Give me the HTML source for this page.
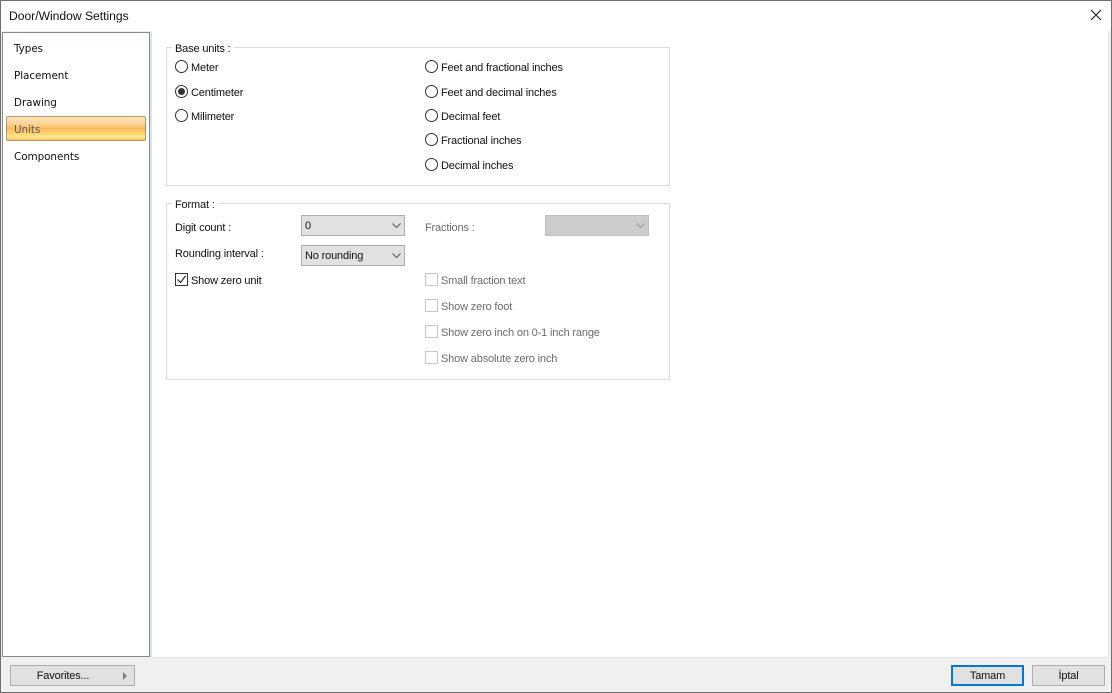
<!DOCTYPE html>
<html><head><meta charset="utf-8">
<style>
html,body{margin:0;padding:0;background:#fff}
#w{position:relative;width:1112px;height:693px;overflow:hidden;background:#fff;font-family:"Liberation Sans",sans-serif;font-size:11px;letter-spacing:-0.16px;color:#111}
#w div{position:absolute;box-sizing:border-box;white-space:nowrap}
.t{line-height:16px;height:16px}
.d{color:#6d6d6d}
.nav{left:14px;font-size:10.4px;letter-spacing:-0.05px;font-family:"DejaVu Sans",sans-serif;line-height:14px;height:14px;color:#111}
.fs{border:1px solid #dcdcdc}
.lg{background:#fff;padding:0 3px;line-height:16px;height:16px}
.cb{width:13px;height:13px;border:1px solid #c8c8c8;background:#fff}
.sel{background:#e1e1e1;border:1px solid #adadad;line-height:21px;padding-left:3px}
.btn{background:#e1e1e1;border:1px solid #adadad;text-align:center;line-height:21px}
svg{position:absolute;overflow:visible}
</style></head><body>
<div id="w">
<div style="left:0;top:31px;width:1112px;height:662px;background:#f0f0f0"></div>
<div style="left:152px;top:31px;width:956px;height:626px;background:#fff"></div>
<div style="left:150px;top:31px;width:2px;height:626px;background:#e3e3e3"></div>
<div style="left:1108px;top:31px;width:1px;height:626px;background:#e3e3e3"></div>
<div style="left:152px;top:657px;width:957px;height:1px;background:#e3e3e3"></div>
<div style="left:0;top:0;width:1112px;height:693px;border:1px solid #6e6e6e"></div>
<div class="t" style="left:9px;top:9px;font-size:12.1px;letter-spacing:0;line-height:14px;height:14px">Door/Window Settings</div>
<svg style="left:1090px;top:9px" width="12" height="12"><path d="M1 1L11 11M11 1L1 11" stroke="#222" stroke-width="1.1" fill="none"/></svg>

<div style="left:2px;top:32px;width:148px;height:625px;background:#fff;border:1px solid #828a94"></div>
<div class="nav" style="top:42px">Types</div>
<div class="nav" style="top:69px">Placement</div>
<div class="nav" style="top:96px">Drawing</div>
<div style="left:6px;top:116px;width:140px;height:25px;border:1px solid #b09a6e;border-radius:2px;background:linear-gradient(#fde3b8 0,#fbd49a 30%,#f9bb5f 50%,#fbd46d 72%,#fee89a 85%,#fbc65e 100%)"></div>
<div class="nav" style="top:123px;color:#5b5b5b">Units</div>
<div class="nav" style="top:150px">Components</div>

<div class="fs" style="left:166px;top:47px;width:504px;height:139px"></div>
<div class="lg" style="left:172px;top:41px;height:14px;line-height:16px">Base units :</div>
<svg style="left:175px;top:60px" width="13" height="13"><circle cx="6.5" cy="6.5" r="6" fill="#fff" stroke="#333"/></svg>
<div class="t" style="left:191px;top:60px">Meter</div>
<svg style="left:175px;top:85px" width="13" height="13"><circle cx="6.5" cy="6.5" r="6" fill="#fff" stroke="#333"/><circle cx="6.5" cy="6.5" r="3.5" fill="#333"/></svg>
<div class="t" style="left:191px;top:85px">Centimeter</div>
<svg style="left:175px;top:109px" width="13" height="13"><circle cx="6.5" cy="6.5" r="6" fill="#fff" stroke="#333"/></svg>
<div class="t" style="left:191px;top:109px">Milimeter</div>

<svg style="left:425px;top:60px" width="13" height="13"><circle cx="6.5" cy="6.5" r="6" fill="#fff" stroke="#333"/></svg>
<div class="t" style="left:441px;top:60px">Feet and fractional inches</div>
<svg style="left:425px;top:85px" width="13" height="13"><circle cx="6.5" cy="6.5" r="6" fill="#fff" stroke="#333"/></svg>
<div class="t" style="left:441px;top:85px">Feet and decimal inches</div>
<svg style="left:425px;top:109px" width="13" height="13"><circle cx="6.5" cy="6.5" r="6" fill="#fff" stroke="#333"/></svg>
<div class="t" style="left:441px;top:109px">Decimal feet</div>
<svg style="left:425px;top:133px" width="13" height="13"><circle cx="6.5" cy="6.5" r="6" fill="#fff" stroke="#333"/></svg>
<div class="t" style="left:441px;top:133px">Fractional inches</div>
<svg style="left:425px;top:158px" width="13" height="13"><circle cx="6.5" cy="6.5" r="6" fill="#fff" stroke="#333"/></svg>
<div class="t" style="left:441px;top:158px">Decimal inches</div>

<div class="fs" style="left:166px;top:203px;width:504px;height:177px"></div>
<div class="lg" style="left:172px;top:197px;height:14px;line-height:16px">Format :</div>
<div class="t" style="left:175px;top:220px">Digit count :</div>
<div class="sel" style="left:301px;top:215px;width:104px;height:21px">0</div>
<svg style="left:392px;top:223px" width="9" height="5"><path d="M0.5 0.5L4.5 4.5L8.5 0.5" stroke="#555" fill="none"/></svg>
<div class="t" style="left:175px;top:246px">Rounding interval :</div>
<div class="sel" style="left:301px;top:245px;width:104px;height:21px">No rounding</div>
<svg style="left:392px;top:253px" width="9" height="5"><path d="M0.5 0.5L4.5 4.5L8.5 0.5" stroke="#555" fill="none"/></svg>
<div class="cb" style="left:175px;top:273px;border-color:#333"></div>
<svg style="left:177px;top:275px" width="9" height="9"><path d="M0.5 4.5L3.5 7.5L8.5 1" stroke="#222" stroke-width="1.1" fill="none"/></svg>
<div class="t" style="left:191px;top:273px">Show zero unit</div>

<div class="t d" style="left:425px;top:220px">Fractions :</div>
<div style="left:545px;top:215px;width:104px;height:21px;background:#cccccc;border:1px solid #bfbfbf"></div>
<svg style="left:636px;top:223px" width="9" height="5"><path d="M0.5 0.5L4.5 4.5L8.5 0.5" stroke="#999" fill="none"/></svg>
<div class="cb" style="left:425px;top:273px"></div>
<div class="t d" style="left:441px;top:273px">Small fraction text</div>
<div class="cb" style="left:425px;top:299px"></div>
<div class="t d" style="left:441px;top:299px">Show zero foot</div>
<div class="cb" style="left:425px;top:325px"></div>
<div class="t d" style="left:441px;top:325px">Show zero inch on 0-1 inch range</div>
<div class="cb" style="left:425px;top:351px"></div>
<div class="t d" style="left:441px;top:351px">Show absolute zero inch</div>

<div class="btn" style="left:10px;top:665px;width:125px;height:21px;padding-right:19px">Favorites...</div>
<svg style="left:123px;top:672px" width="4" height="8"><path d="M0 0L4 4L0 8Z" fill="#808080"/></svg>
<div class="btn" style="left:951px;top:665px;width:73px;height:21px;border:2px solid #0078d7;line-height:19px">Tamam</div>
<div class="btn" style="left:1032px;top:665px;width:73px;height:21px">İptal</div>
</div>
</body></html>
